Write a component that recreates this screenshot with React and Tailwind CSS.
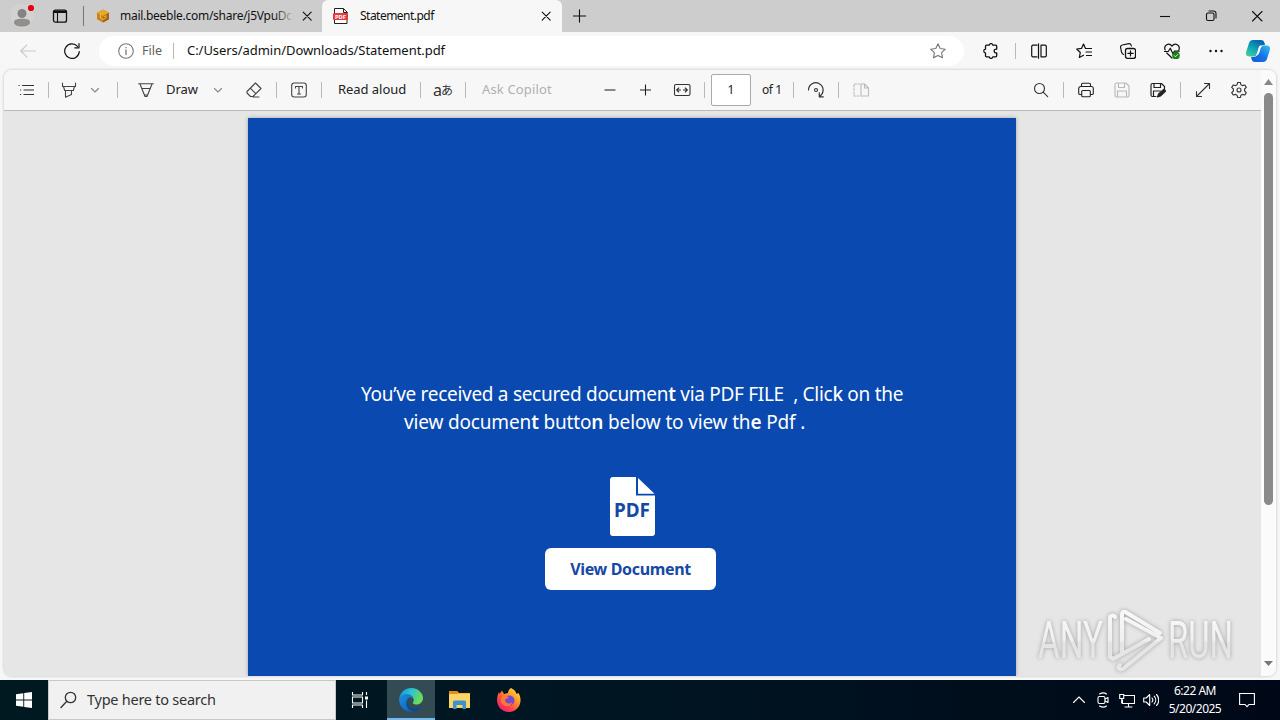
import React from 'react';

const Icon = ({ className = 'w-4 h-4', box = 16, children }) => (
  <svg
    className={`shrink-0 ${className}`}
    viewBox={`0 0 ${box} ${box}`}
    fill="none"
    stroke="currentColor"
    strokeWidth="1.1"
    strokeLinecap="round"
    strokeLinejoin="round"
  >
    {children}
  </svg>
);

const Sep = ({ className }) => <div className={`w-px h-4 shrink-0 bg-[#b8b8b8] ${className}`} />;

const Close = ({ className }) => (
  <Icon className={className}><path d="M4.200 4.200l8 8M12.200 4.200l-8 8" /></Icon>
);

const Chevron = ({ className }) => (
  <Icon box={10} className={`w-[10px] h-[10px] text-[#888] ${className}`}><path d="M1.500 3.500L5 7l3.500-3.500" /></Icon>
);

function TabStrip() {
  return (
    <div className="flex h-8 items-center bg-[#cdcdcd] text-[12px]">
      <svg className="ml-[11px] h-7 w-6 shrink-0" viewBox="0 0 24 28">
        <circle cx="11" cy="14" r="12" fill="#d4d2d1" />
        <circle cx="11" cy="11.500" r="4.500" fill="#858381" />
        <path d="M3 20.500c0-3 3-3.700 8-3.700s8 .7 8 3.700c0 2.500-3.500 4-8 4s-8-1.500-8-4z" fill="#918f8d" />
        <circle cx="20" cy="6" r="3.100" fill="#e3000f" />
      </svg>
      <Icon className="ml-[17px] h-4 w-4">
        <rect x="1.500" y="2.200" width="13" height="12" rx="2" strokeWidth="1.300" />
        <path d="M2 3.800h12" strokeWidth="2.200" />
        <path d="M5.500 5v9" />
      </Icon>
      <div className="ml-[15px] h-5 w-px shrink-0 bg-[#777]" />
      <svg className="ml-[12px] h-[14px] w-[14px] shrink-0" viewBox="0 0 14 14">
        <path d="M7 .5l6 3.300v6.500L7 13.500 1 10.300V3.800z" fill="#c98316" />
        <path d="M7 .5l6 3.300-6 3.200-6-3.200z" fill="#e8a92e" />
        <path d="M7 7l6-3.200v6.500l-6 3.200z" fill="#a5630e" />
        <path d="M4.500 4.500v4.700L7 10.500l3-1.700V6.500L7.500 8" stroke="#f1b64d" fill="none" />
      </svg>
      <div className="relative ml-[10px] w-[174px] shrink-0 whitespace-nowrap tracking-[-0.27px]">
        mail.beeble.com/share/j5VpuDc
        <div className="absolute inset-y-0 right-0 w-5 bg-gradient-to-r from-transparent to-[#cdcdcd]" />
      </div>
      <Close className="ml-[5px] h-4 w-4" />
      <div className="ml-[7px] flex h-8 w-[240px] shrink-0 items-center rounded-t-md bg-[#f7f7f7]">
        <svg className="ml-[11px] h-4 w-4 shrink-0" viewBox="0 0 16 16">
          <path d="M1.500 15.500V.5h9l3.500 3.500v11.500z" fill="#fff" stroke="#222" />
          <path d="M10.500.5v4h4" fill="none" stroke="#222" />
          <rect y="5" width="15" height="7" rx="1" fill="#e8383f" />
          <text x="7.500" y="10.600" textAnchor="middle" fontSize="5.800" fontWeight="700" fill="#fff">PDF</text>
        </svg>
        <span className="ml-[11px] w-[100px] tracking-[-0.52px]">Statement.pdf</span>
        <Close className="ml-[78px] h-4 w-4" />
      </div>
      <Icon className="ml-[9px] h-4 w-4"><path d="M8.500 1.500v13M2 8h13" strokeLinecap="butt" /></Icon>
      <Icon className="ml-auto h-4 w-4"><path d="M3 8.500h10" strokeLinecap="butt" /></Icon>
      <Icon className="ml-[30px] h-4 w-4">
        <rect x="3.500" y="5" width="7.500" height="7.500" rx="1.500" />
        <path d="M6 3h4.500A2.500 2.500 0 0 1 13 5.500V10" />
      </Icon>
      <Icon className="mr-[15px] ml-[30px] h-4 w-4"><path d="M3.500 3.500l9.500 9.500M13 3.500l-9.500 9.500" /></Icon>
    </div>
  );
}

function AddressBar() {
  return (
    <div className="flex h-[38px] items-center bg-[#f7f7f7]">
      <Icon className="ml-5 h-4 w-4 text-[#c9c9c9]"><path d="M15.500 8H.8M7 1.800L.8 8 7 14.200" /></Icon>
      <Icon className="ml-7 h-4 w-4"><path d="M15.300 8.500A7.300 7.300 0 1 1 13.500 3.300M15 .6v4.200h-4.200" strokeWidth="1.200" /></Icon>
      <div className="ml-[19px] flex h-[30px] w-[865px] shrink-0 items-center rounded-full bg-white">
        <Icon className="ml-[19px] h-4 w-4 text-[#777]">
          <circle cx="8" cy="8" r="7.300" />
          <path d="M8 7v4.500M8 4.500v.2" strokeWidth="1.300" />
        </Icon>
        <span className="ml-2 w-[22px] text-[12.500px] text-[#606060]">File</span>
        <Sep className="ml-[9px] bg-[#888]" />
        <span className="ml-[13px] text-[13px] tracking-[-0.05px]">C:/Users/admin/Downloads/Statement.pdf</span>
        <Icon className="mr-[18px] ml-auto h-4 w-4 text-[#777]">
          <path d="M8 .8l2.200 4.700 5.100.7-3.700 3.500.9 5.100L8 12.400l-4.500 2.400.9-5.100L.7 6.200l5.100-.7z" />
        </Icon>
      </div>
      <Icon className="ml-[19px] h-4 w-4">
        <path d="M3.500 2.200h2.700c.1-2.100 3.500-2.100 3.600 0h2.900a1 1 0 0 1 1 1v3c-3.400-.6-3.400 4.200 0 3.600v3a1 1 0 0 1-1 1H9.800c-.1 2.100-3.500 2.100-3.600 0H3.500a1 1 0 0 1-1-1V9.900C.2 9.800.2 6.300 2.500 6.200v-3a1 1 0 0 1 1-1z" strokeWidth="1.300" />
      </Icon>
      <Sep className="ml-4" />
      <Icon className="ml-[15px] h-4 w-4">
        <path d="M6 2.200H2A1.300 1.300 0 0 0 .7 3.500v9A1.300 1.300 0 0 0 2 13.800h4M10 2.200h4a1.300 1.300 0 0 1 1.300 1.300v9a1.300 1.300 0 0 1-1.300 1.300h-4zM7.500.8v14.400" strokeWidth="1.200" />
      </Icon>
      <Icon className="ml-[29px] h-4 w-4">
        <path d="M9.500 5.500L7.500 1 5.500 5.400.7 6l3.600 3.500-1 5 4.200-2.300M9.500 5.500h6M10 9h5.500M10.500 12.500h5" strokeWidth="1.200" />
      </Icon>
      <Icon className="ml-7 h-4 w-4">
        <rect x="5.500" y="5.500" width="10" height="9.800" rx="2" strokeWidth="1.300" />
        <path d="M10.500 7.800v5.200M7.900 10.400h5.200M3.500 11.500C2 11 1.800 10 1.500 9L.6 4.500C.3 3 1 2.300 2.300 2L9 .7c1.300-.2 2 .4 2.400 2.300" strokeWidth="1.200" />
      </Icon>
      <Icon className="ml-7 h-4 w-4">
        <path d="M1.200 7C-.8 2.300 5-1 8 3.200 11-1 16.800 2.300 14.800 7M2.800 10L8 15M.5 8.500h3.800l2-3.300 2.600 5.500 1.700-2.500h4.600" strokeWidth="1.200" />
        <circle cx="12" cy="12.500" r="3.800" fill="#168014" stroke="none" />
        <path d="M10.300 12.600l1.200 1.200 2.300-2.400" stroke="#fff" strokeWidth=".9" />
      </Icon>
      <Icon className="ml-7 h-4 w-4">
        <g fill="currentColor" stroke="none"><circle cx="2.500" cy="8" r="1.200" /><circle cx="8" cy="8" r="1.200" /><circle cx="13.500" cy="8" r="1.200" /></g>
      </Icon>
      <svg className="ml-[22px] h-6 w-6 shrink-0" viewBox="0 0 24 24">
        <defs>
          <linearGradient id="cpA" x1="0" y1="1" x2=".6" y2="0"><stop stopColor="#5bd08c" /><stop offset=".45" stopColor="#13afb8" /><stop offset="1" stopColor="#0666ae" /></linearGradient>
          <linearGradient id="cpB" x1="0" y1="1" x2="1" y2="0"><stop stopColor="#1855de" /><stop offset=".5" stopColor="#1674e8" /><stop offset="1" stopColor="#36c5f0" /></linearGradient>
        </defs>
        <path d="M7 1h8c2 0 3 1 3.500 3l.5 2h-3c-2 0-2.500 1-3 2.500L11 15c-.6 2-1.500 2.500-3 2.500H3c-3 0-3.500-2.500-2.700-5L3 4c.7-2 2-3 4-3z" fill="url(#cpA)" />
        <path d="M17 23H9c-2 0-3-1-3.500-3L5 18h3c2 0 2.500-1 3-2.500L13 9c.6-2 1.500-2.500 3-2.500h5c3 0 3.500 2.500 2.700 5L21 20c-.7 2-2 3-4 3z" fill="url(#cpB)" />
        <path d="M13.500 7h3c-2 1-2 3-2.600 5-.8 2.700-1.400 4-4.400 5 1.800-2 2.500-7.500 4-10z" fill="#fff" />
      </svg>
    </div>
  );
}

function PdfToolbar() {
  return (
    <div className="flex h-[41px] shrink-0 items-center border-b border-[#bcbcbc] bg-[#f7f7f7] text-[13px] text-[#222]">
      <Icon className="ml-[14px] h-4 w-4 text-[#333]">
        <path d="M4.500 3.500h11M6 8h9.500M6 12.500h9.500M1 3.500h.2M2.500 8h.2M2.500 12.500h.2" strokeWidth="1.200" />
      </Icon>
      <Sep className="ml-[14px]" />
      <Icon className="ml-3 h-4 w-4 text-[#444]">
        <path d="M1.500 1v3.500h13V1M2.500 4.500l1.200 4h8.600l1.200-4M4.500 8.500v6.700l6-2.700v-4" />
      </Icon>
      <Chevron className="ml-[13px]" />
      <Sep className="ml-[17px]" />
      <Icon className="ml-5 h-4 w-4 text-[#444]">
        <path d="M.7 1.800h14.600M2 2l5 12.500h2L14 2M4 6.500h8M6.500 13h3" />
      </Icon>
      <span className="ml-3 w-8 tracking-[-0.05px]">Draw</span>
      <Chevron className="ml-[15px]" />
      <Icon className="ml-[23px] h-4 w-4 text-[#444]">
        <path d="M9.500 1L15 6.500l-8 8H4.500L1 11v-1.500zM4.300 6.200l5.500 5.500M7 15h6" />
      </Icon>
      <Sep className="ml-[14px]" />
      <Icon className="ml-[14px] h-4 w-4 text-[#444]">
        <rect x=".7" y="1" width="14.600" height="14" rx="2.500" />
        <path d="M4.500 6V4.500h7V6M8 4.500v7.500M6.500 12h3" />
      </Icon>
      <Sep className="ml-[14px]" />
      <span className="ml-4 w-[68px] whitespace-nowrap tracking-[-0.05px]">Read aloud</span>
      <Sep className="ml-[14px]" />
      <span className="ml-3 flex w-5 items-center leading-4 text-[#333]">
        <span className="w-2 text-[16px]">a</span>
        <span className="font-['Noto_Sans_CJK_JP',sans-serif] text-[12px]">あ</span>
      </span>
      <Sep className="ml-3" />
      <span className="ml-4 w-[70px] whitespace-nowrap tracking-[0.15px] text-[#b0b0b0]">Ask Copilot</span>
      <Icon className="ml-[50px] h-4 w-4 text-[#666]"><path d="M3 8h10" strokeWidth="1.300" /></Icon>
      <Icon className="ml-[19px] h-4 w-4"><path d="M8.500 2.500v11M3 8h11" strokeLinecap="butt" /></Icon>
      <Icon box={18} className="ml-5 h-[18px] w-[18px] text-[#333]">
        <rect x="1.500" y="3.500" width="15.500" height="11" rx="1.500" />
        <path d="M7.500 9H4M5.700 7L3.700 9l2 2M10.500 9H14M12.300 7l2 2-2 2" />
      </Icon>
      <Sep className="ml-[13px]" />
      <div className="ml-[6px] flex h-8 w-10 shrink-0 items-center justify-center rounded-[2px] border border-[#aaa] bg-white text-[12px]">1</div>
      <span className="ml-[11px] w-[19px] whitespace-nowrap text-[12px] tracking-[-0.4px]">of 1</span>
      <Sep className="ml-3" />
      <Icon box={18} className="ml-[13px] h-[18px] w-[18px] text-[#333]">
        <path d="M1.500 9a7.300 7.300 0 1 1 11.300 6.200M12.300 11.800v4h4" strokeWidth="1.200" />
        <circle cx="9" cy="9" r="1.500" />
      </Icon>
      <Sep className="ml-[13px]" />
      <Icon className="ml-[14px] h-4 w-4 text-[#bbb]">
        <path d="M7 2H1v12h6" strokeDasharray="2 1.500" />
        <path d="M8 2h3.500l4 4v8H8zM11.500 2v4h4" />
      </Icon>
      <Icon className="ml-auto h-4 w-4 text-[#333]"><circle cx="6.500" cy="6.500" r="5" /><path d="M10.200 10.200l4.500 4.500" /></Icon>
      <Sep className="ml-[14px]" />
      <Icon className="ml-[14px] h-4 w-4">
        <path d="M3.500 4.500V2.500A1.200 1.200 0 0 1 4.700 1.300h6.600a1.200 1.200 0 0 1 1.200 1.200v2M3.500 12.500H2A1.300 1.300 0 0 1 .7 11.200V6.500a2 2 0 0 1 2-2h10.600a2 2 0 0 1 2 2v4.700a1.300 1.300 0 0 1-1.300 1.300h-1.500" />
        <rect x="3.700" y="8.500" width="8.600" height="6.200" rx="1" />
      </Icon>
      <Icon className="ml-5 h-4 w-4 text-[#b8b8b8]">
        <path d="M1 2.500A1.500 1.500 0 0 1 2.500 1H12l3 3v9.500a1.500 1.500 0 0 1-1.500 1.500h-11A1.500 1.500 0 0 1 1 13.500zM4.500 1v4.500h6V1M3.500 15V9h9v6" />
      </Icon>
      <Icon className="ml-5 h-4 w-4">
        <path d="M6 14.500H2.500A1.500 1.500 0 0 1 1 13V3a1.500 1.500 0 0 1 1.500-1.500h9L14.500 4.500v2M4 1.500v4h6.500v-4M3.500 14.500V9h7" strokeWidth="1.200" />
        <path d="M7.500 15l1-3 5.500-4.800 1.700 1.900L10.500 14z" fill="currentColor" />
      </Icon>
      <Sep className="ml-[14px]" />
      <Icon className="ml-[14px] h-4 w-4 text-[#333]"><path d="M1.500 14.500l13-13M9.500 1.500h5v5M1.500 9.500v5h5" /></Icon>
      <Icon className="mr-[14px] ml-5 h-4 w-4 text-[#333]">
        <path d="M6.700.4h2.600l.6 2.300 1.500.9 2.400-.6 1.500 2.400L13.600 7v2l1.700 1.600-1.500 2.400-2.400-.6-1.500.9-.6 2.300H6.700l-.6-2.300-1.500-.9-2.400.6-1.500-2.400L2.400 9V7L.7 5.400 2.200 3l2.400.6 1.500-.9z" />
        <circle cx="8" cy="8" r="2" />
      </Icon>
    </div>
  );
}

function DocumentPage() {
  return (
    <div className="ml-[244px] mt-[7px] flex w-[768px] grow flex-col bg-[#0a49b0] text-white shadow-[0_0_4px_rgba(0,0,0,0.3)]">
      <div className="mt-[262px] ml-[113px] text-[19px] leading-7 whitespace-pre">
        <p className="tracking-[-0.295px]">You’ve received a secured documen<span className="font-semibold">t</span> via PDF FILE  , Clic<span className="font-medium">k</span> on the</p>
        <p className="ml-[43px] tracking-[-0.16px]">view documen<span className="font-semibold">t</span> butto<span className="font-semibold">n</span> below to view th<span className="font-semibold">e</span> Pdf .</p>
      </div>
      <svg className="mt-[41px] ml-[362px] h-[59px] w-[45px]" viewBox="0 0 45 59">
        <path d="M3 0h23v18.500h19V56a3 3 0 0 1-3 3H3a3 3 0 0 1-3-3V3a3 3 0 0 1 3-3z" fill="#fff" />
        <path d="M28 1l16.500 15.700H28z" fill="#fff" />
        <text x="22" y="40" textAnchor="middle" fontSize="19" fontWeight="700" fill="#1648a5" textLength="36" lengthAdjust="spacingAndGlyphs">PDF</text>
      </svg>
      <button className="mt-3 ml-[297px] h-[42px] w-[171px] rounded-md bg-white text-[16px] font-bold tracking-[-0.34px] text-[#1648a5]">
        View Document
      </button>
    </div>
  );
}

function Watermark() {
  return (
    <svg className="absolute top-[606px] left-[1036px] h-[68px] w-[210px] overflow-visible drop-shadow-[0_0_2px_rgba(0,0,0,0.3)]" viewBox="0 0 210 68" fill="none">
      <defs>
        <linearGradient id="wmFade" gradientUnits="userSpaceOnUse" x1="0" y1="8" x2="0" y2="66">
          <stop stopColor="#f8f8f8" />
          <stop offset=".45" stopColor="#f0f0f0" />
          <stop offset=".5" stopColor="#e4e4e4" />
          <stop offset="1" stopColor="#e8e8e8" />
        </linearGradient>
      </defs>
      <g fill="url(#wmFade)" fontFamily="Roboto, sans-serif" fontSize="52">
        <text x="2" y="52" textLength="65" lengthAdjust="spacingAndGlyphs">ANY</text>
        <text x="132" y="52" textLength="65" lengthAdjust="spacingAndGlyphs">RUN</text>
      </g>
      <g stroke="url(#wmFade)" strokeWidth="4" strokeLinejoin="round" strokeLinecap="round">
        <path d="M74 51V12c0-3 4-3 5-1" />
        <path d="M86 46V9c0-4 3-4 5-2l33 20M90 13l35 19L88 62c-4 3-8 0-4-3M74 51l3 2 36-20" />
      </g>
    </svg>
  );
}

function Taskbar() {
  return (
    <div className="flex h-10 items-center bg-gradient-to-r from-[#001820] via-[#001522] to-[#000817] text-white">
      <svg className="ml-4 h-4 w-4 shrink-0" viewBox="0 0 16 16" fill="#fff">
        <path d="M0 2.200L7.300 1.200v6.300H0zM8.200 1L16 0v7.500H8.200zM0 8.500h7.300v6.300L0 13.800zM8.200 8.500H16V16l-7.800-1.100z" />
      </svg>
      <div className="ml-4 flex h-10 w-[288px] shrink-0 items-center border border-[#c8c8c8] bg-[#f1f1f1] text-[#333]">
        <Icon box={18} className="ml-[11px] h-[18px] w-[18px]"><circle cx="10.500" cy="6.500" r="5.200" strokeWidth="1.300" /><path d="M6.800 10.300L1 16.500" strokeWidth="1.300" /></Icon>
        <span className="ml-[9px] text-[14.500px] tracking-[-0.25px]">Type here to search</span>
      </div>
      <Icon box={18} className="ml-[15px] h-[18px] w-[18px]">
        <path d="M1.500 1v3h10V1M1.500 17v-3h10v3M1.500 6h10v6h-10zM15.500 1v3M15.500 9.500V17" strokeLinecap="butt" />
        <path d="M14 5.500h3v3h-3z" fill="#fff" stroke="none" />
      </Icon>
      <div className="ml-[18px] flex h-10 w-12 shrink-0 items-center justify-center border-b-2 border-[#76b9ed] bg-[#334c54]">
        <svg className="mt-[2px] h-6 w-6" viewBox="0 0 24 24">
          <defs>
            <linearGradient id="edA" x1="0" y1="0" x2="1" y2=".4"><stop stopColor="#168bd8" /><stop offset=".5" stopColor="#2bc3d2" /><stop offset="1" stopColor="#6bdb57" /></linearGradient>
            <linearGradient id="edB" x1="0" y1="0" x2="1" y2="1"><stop stopColor="#1b90de" /><stop offset="1" stopColor="#0b5cb5" /></linearGradient>
          </defs>
          <path d="M.2 11C1 4.500 6 0 12 0c7 0 12 5 12 10 0 4-3 6.500-6.500 6.500-3 0-4.500-1.200-3.200-2.700C16 11 13 7 8.500 7 4 7 1 9 .2 11z" fill="url(#edA)" />
          <path d="M.1 12C0 8 4 6 8 6c3 0 5.500 1.500 6 4-4-2-7 1.500-6.500 5 .5 4.500 4 8 9 8C8 26 .5 20 .1 12z" fill="url(#edB)" />
          <path d="M11 10c-5 4-1 12 6 10 2.500-.5 4-1.500 5-2.500 1-.8 1.300 0 .8.800C21 21.500 18 23.300 15 23.500 8 23.500 4.500 14 11 10z" fill="#114a8b" />
        </svg>
      </div>
      <svg className="ml-[14px] h-[20px] w-[22px] shrink-0" viewBox="0 0 22 20">
        <path d="M0 1h8l2 2h11v15H0z" fill="#f5b72e" />
        <path d="M0 4h21v14H0z" fill="#fbd467" />
        <path d="M0 1h8l1.500 2L8 4H0z" fill="#e78c1b" />
        <path d="M4 19v-7a1.500 1.500 0 0 1 1.500-1.500h10A1.500 1.500 0 0 1 17 12v7h-3.500v-4h-6v4z" fill="#3a92cf" />
      </svg>
      <svg className="ml-[26px] h-6 w-6 shrink-0" viewBox="0 0 24 24">
        <defs><linearGradient id="ffA" x1="1" y1="0" x2=".2" y2="1"><stop stopColor="#fff04d" /><stop offset=".4" stopColor="#ff9a2b" /><stop offset=".75" stopColor="#ff3d4d" /><stop offset="1" stopColor="#e61e86" /></linearGradient></defs>
        <path d="M14 0c4 2 5 4 5.500 6l2-1c5 8 .5 19-9.500 19S-3 14 2 4l.6 2L5 2.500 7 6l4-1c0-2 1-4 3-5z" fill="url(#ffA)" />
        <circle cx="12.500" cy="12.500" r="5" fill="#7849cf" />
        <path d="M5 8c3-1 5 0 7 1.500l-4 2c0 4 4 5 7 3-2 6-11 4-11-2z" fill="#ff7a32" />
      </svg>
      <Icon className="ml-auto h-4 w-4"><path d="M2.500 10.500L8 5l5.500 5.500" /></Icon>
      <Icon className="ml-2 h-4 w-4">
        <rect x="3" y="4.500" width="7" height="7" rx="1.500" />
        <path d="M10 7l3-1.500v5L10 9M4.500 2c2.500-1.500 5-1.500 7 0M4.500 14c2.500 1.500 5 1.500 7 0" />
      </Icon>
      <Icon className="ml-2 h-4 w-4">
        <path d="M5.500 3.500h10v8h-12V8M9.500 11.500v3.500M6 15h7M.7 2.500h4v4h-4zM2.700 6.500V11" strokeLinejoin="miter" />
      </Icon>
      <Icon className="ml-2 h-4 w-4"><path d="M.7 6v4h2.500l3.500 3.500v-11L3.200 6zM9 6c1 1.200 1 2.800 0 4M11.200 4.200c2 2.200 2 5.400 0 7.600M13.500 2.500c3 3.200 3 7.800 0 11" /></Icon>
      <div className="ml-[5px] w-[62px] shrink-0 text-center text-[12px] leading-[18px] tracking-[-0.5px] whitespace-nowrap">
        <div>6:22 AM</div>
        <div>5/20/2025</div>
      </div>
      <Icon className="mr-[25px] ml-[13px] h-4 w-4"><path d="M.6 1.500h14.800v11H10L8 14.700 6 12.500H.6z" strokeLinejoin="miter" /></Icon>
    </div>
  );
}

export default function App() {
  return (
    <div className="relative flex h-[720px] w-[1280px] flex-col overflow-hidden bg-[#f7f7f7] font-['Noto_Sans','Open_Sans',sans-serif] text-[#111]">
      <TabStrip />
      <AddressBar />
      <div className="mx-1 mb-1 flex grow overflow-hidden rounded-lg shadow-[0_0_3px_rgba(0,0,0,0.25)]">
        <div className="flex w-[1257px] shrink-0 flex-col bg-[#e6e6e6]">
          <PdfToolbar />
          <DocumentPage />
        </div>
        <div className="flex w-[15px] flex-col items-center bg-[#fbfbfb]">
          <svg className="mt-[9px] h-[6px] w-[9px]" viewBox="0 0 9 6"><path d="M0 6l4.500-6L9 6z" fill="#888" /></svg>
          <div className="mt-[8px] h-[412px] w-[9px] rounded-full bg-[#8a8a8a]" />
          <svg className="mt-auto mb-[10px] h-[5px] w-[9px]" viewBox="0 0 9 5"><path d="M0 0l4.500 5L9 0z" fill="#777" /></svg>
        </div>
      </div>
      <Taskbar />
      <Watermark />
    </div>
  );
}
